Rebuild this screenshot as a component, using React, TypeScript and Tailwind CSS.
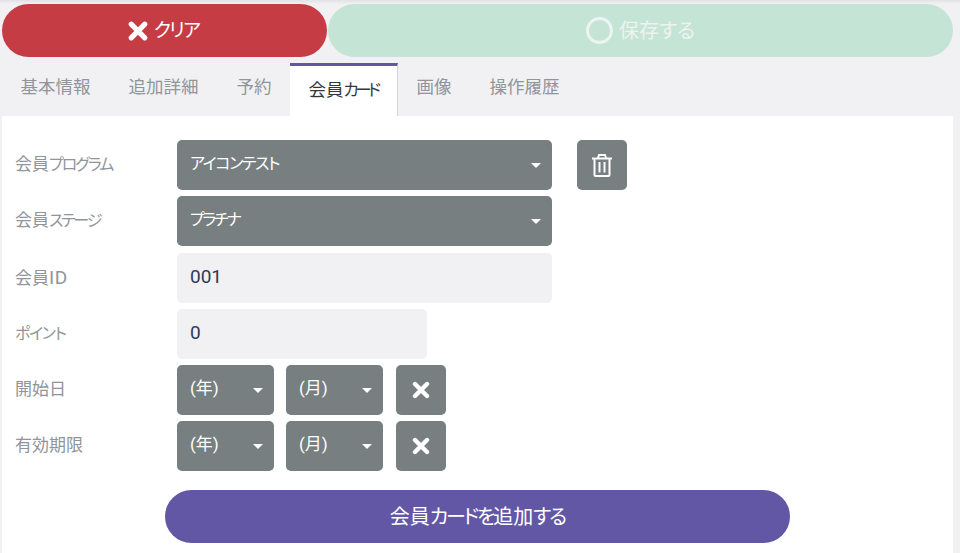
import type { ReactNode } from "react";

const font = { fontFamily: '"Roboto","Noto Sans CJK JP",sans-serif', fontFeatureSettings: '"palt"' };

function Caret() {
  return <span className="ml-auto h-0 w-0 border-x-[5px] border-t-[5px] border-x-transparent border-t-white" />;
}

function Select({ label, className }: { label: ReactNode; className: string }) {
  return (
    <div className={`flex h-[50px] items-center rounded-[5px] bg-[#787f80] pl-[13px] pr-[11px] text-[17px] text-white ${className}`}>
      <span className="-mt-[2px]">{label}</span>
      <Caret />
    </div>
  );
}

function ClearBtn() {
  return (
    <div className="flex h-[50px] w-[50px] items-center justify-center rounded-[5px] bg-[#787f80]">
      <svg width="18" height="18" viewBox="0 0 18 18"><path d="M3 3 L15 15 M15 3 L3 15" stroke="#fff" strokeWidth="4.4" strokeLinecap="round" /></svg>
    </div>
  );
}

function Row({ label, children, className = "" }: { label: ReactNode; children: ReactNode; className?: string }) {
  return (
    <div className={`flex h-[50px] items-center ${className}`}>
      <span className="w-[175px] shrink-0 pl-[13px] text-[17px] text-[#8f959a]">{label}</span>
      {children}
    </div>
  );
}

function DateRow({ label, className }: { label: string; className: string }) {
  return (
    <Row label={label} className={className}>
      <Select label="(年)" className="w-[97px]" />
      <Select label="(月)" className="ml-[12px] w-[97px]" />
      <div className="ml-[13px]"><ClearBtn /></div>
    </Row>
  );
}

export default function App() {
  const tab = "flex items-center px-[19px] pb-[4px]";
  return (
    <div style={font} className="flex h-[553px] w-[960px] flex-col overflow-hidden bg-[#f1f1f4]">
      <div className="flex h-[4px] shrink-0 bg-gradient-to-b from-[#e2e2e4] to-[#f1f1f4]" />
      <div className="flex h-[53px] shrink-0 gap-[1px] pl-[2px] pr-[7px]">
        <div className="flex w-[325px] items-center justify-center gap-[5px] rounded-full bg-[#c63c45] pr-[3px] text-[19px] text-white">
          <svg width="22" height="22" viewBox="0 0 21 21"><path d="M4 4 L17 17 M17 4 L4 17" stroke="#fff" strokeWidth="5" strokeLinecap="round" /></svg>
          <span className="pt-[1px] tracking-[-1.6px]">クリア</span>
        </div>
        <div className="flex flex-1 items-center justify-center gap-[6px] rounded-full bg-[#c4e4d6] text-[20px] text-[#eef3f1]">
          <span className="h-[27px] w-[27px] rounded-full border-[3px] border-[#eef3f1]" />
          <span className="pt-[1px]">保存する</span>
        </div>
      </div>
      <div className="mt-[6px] flex h-[53px] shrink-0 pl-[1.5px] text-[17.5px] text-[#8f959a]">
        <div className={tab}>基本情報</div>
        <div className={tab}>追加詳細</div>
        <div className={tab}>予約</div>
        <div className="-ml-[1px] flex items-center border-r border-t-[3px] border-r-[#d4d4dc] border-t-[#6257a5] bg-white pb-[1px] pl-[19px] pr-[19px] text-[#33373b]">
          <span>会員<span className="text-[16.5px] tracking-[-3.5px]">カード</span></span>
        </div>
        <div className={tab}>画像</div>
        <div className={tab}>操作履歴</div>
      </div>
      <div className="ml-[2px] mr-[7px] flex flex-1 flex-col bg-white pt-[24px]">
        <Row label={<>会員<span className="text-[16px] tracking-[-2px]">プログラム</span></>}>
          <Select label={<span className="text-[16px] tracking-[-1.4px]">アイコンテスト</span>} className="w-[375px]" />
          <div className="ml-[25px] flex h-[50px] w-[50px] items-center justify-center rounded-[5px] bg-[#787f80]">
            <svg width="22" height="24" viewBox="0 0 22 24" fill="none" stroke="#fff" strokeWidth="2">
              <path d="M1 5.5 H21" />
              <path d="M7 5 L8 2 H14 L15 5" />
              <path d="M3.5 5.5 V22 A1 1 0 0 0 4.5 23 H17.5 A1 1 0 0 0 18.5 22 V5.5" />
              <path d="M8.5 9 V19.5 M13.5 9 V19.5" />
            </svg>
          </div>
        </Row>
        <Row label={<>会員<span className="text-[16px] tracking-[-2.25px]">ステージ</span></>} className="mt-[6px]">
          <Select label={<span className="text-[16px] tracking-[-2.2px]">プラチナ</span>} className="w-[375px]" />
        </Row>
        <Row label={<>会員<span className="text-[19px] tracking-[0.5px]">ID</span></>} className="mt-[7px]">
          <div className="flex h-[50px] w-[375px] items-center rounded-[5px] bg-[#f1f1f4] pb-[1px] pl-[13px] text-[19px] text-[#2f3b56]">001</div>
        </Row>
        <Row label={<span className="text-[16px] tracking-[-1.4px]">ポイント</span>} className="mt-[6px]">
          <div className="flex h-[50px] w-[250px] items-center rounded-[5px] bg-[#f1f1f4] pb-[1px] pl-[13px] text-[19px] text-[#2f3b56]">0</div>
        </Row>
        <DateRow label="開始日" className="mt-[6px]" />
        <DateRow label="有効期限" className="mt-[6px]" />
        <div className="ml-[163px] mt-[19px] flex h-[53px] w-[625px] items-center justify-center rounded-full bg-[#6257a5] text-[20px] text-white">
          <span>会員<span className="tracking-[-2.3px]">カードを</span>追加<span className="tracking-[-2px]">する</span></span>
        </div>
      </div>
    </div>
  );
}
